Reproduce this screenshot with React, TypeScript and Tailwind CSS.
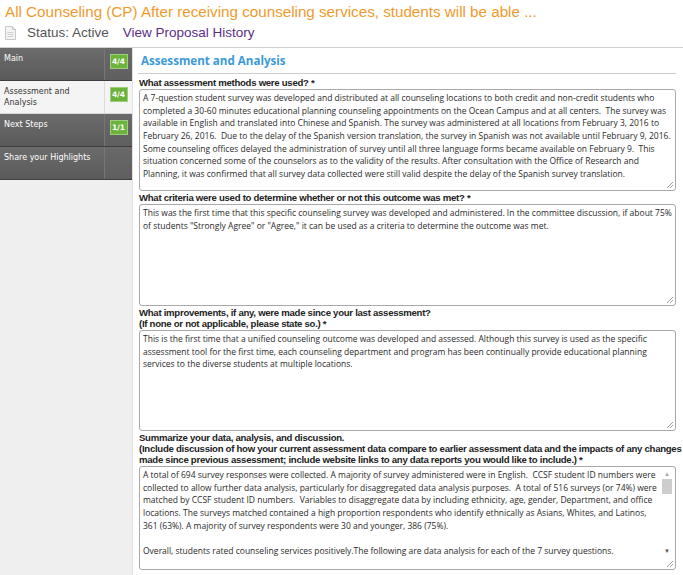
import React from 'react';

type NavItem = { label: string[]; badge?: string; active?: boolean };

const navItems: NavItem[] = [
  { label: ['Main'], badge: '4/4' },
  { label: ['Assessment and', 'Analysis'], badge: '4/4', active: true },
  { label: ['Next Steps'], badge: '1/1' },
  { label: ['Share your Highlights'] },
];

const answers = {
  methods: [
    'A 7-question student survey was developed and distributed at all counseling locations to both credit and non-credit students who',
    'completed a 30-60 minutes educational planning counseling appointments on the Ocean Campus and at all centers.  The survey was',
    'available in English and translated into Chinese and Spanish. The survey was administered at all locations from February 3, 2016 to',
    'February 26, 2016.  Due to the delay of the Spanish version translation, the survey in Spanish was not available until February 9, 2016.',
    'Some counseling offices delayed the administration of survey until all three language forms became available on February 9.  This',
    'situation concerned some of the counselors as to the validity of the results. After consultation with the Office of Research and',
    'Planning, it was confirmed that all survey data collected were still valid despite the delay of the Spanish survey translation.',
  ],
  criteria: [
    'This was the first time that this specific counseling survey was developed and administered. In the committee discussion, if about 75%',
    'of students "Strongly Agree" or "Agree," it can be used as a criteria to determine the outcome was met.',
  ],
  improvements: [
    'This is the first time that a unified counseling outcome was developed and assessed. Although this survey is used as the specific',
    'assessment tool for the first time, each counseling department and program has been continually provide educational planning',
    'services to the diverse students at multiple locations.',
  ],
  summary: [
    'A total of 694 survey responses were collected. A majority of survey administered were in English.  CCSF student ID numbers were',
    'collected to allow further data analysis, particularly for disaggregated data analysis purposes.  A total of 516 surveys (or 74%) were',
    'matched by CCSF student ID numbers.  Variables to disaggregate data by including ethnicity, age, gender, Department, and office',
    'locations. The surveys matched contained a high proportion respondents who identify ethnically as Asians, Whites, and Latinos,',
    '361 (63%). A majority of survey respondents were 30 and younger, 386 (75%).',
    '',
    'Overall, students rated counseling services positively.The following are data analysis for each of the 7 survey questions.',
  ],
};

function DocIcon() {
  return (
    <svg width="11" height="14" viewBox="0 0 11 14" className="shrink-0">
      <path d="M0.5 0.5h7l3 3v10h-10z" fill="#f4f4f4" stroke="#c8c8c8" />
      <path d="M7.5 0.5v3h3" fill="#e6e6e6" stroke="#c8c8c8" />
      <path d="M2.5 6.5h6M2.5 8.5h6M2.5 10.5h6" stroke="#d0d0d0" />
    </svg>
  );
}

function Grip() {
  return (
    <svg width="9" height="9" viewBox="0 0 9 9" className="absolute right-[1px] bottom-[1px]">
      <path d="M8 2L2 8M8 5L5 8" stroke="#a0a0a0" strokeWidth="1" />
    </svg>
  );
}

function Answer({ lines, height, scroll }: { lines: string[]; height: string; scroll?: boolean }) {
  return (
    <div className={`relative ${height} border border-[#a9a9a9] rounded-[3px] bg-white overflow-hidden`}>
      <div className="pl-[3px] pt-[2px] font-['Open_Sans',sans-serif] text-[8.5px] leading-[12.7px] text-[#2a2a2a]">
        {lines.map((l, i) => (
          <div key={i} className="whitespace-pre h-[12.7px]">{l}</div>
        ))}
      </div>
      {scroll && (
        <div className="absolute right-[2px] top-[2px] w-[12px] h-[87px] flex flex-col items-center bg-white">
          <span className="text-[6px] leading-[10px] text-[#a8a8a8]">▲</span>
          <div className="w-[10px] h-[15px] bg-[#cdcdcd]" />
          <div className="flex-1" />
          <span className="text-[6px] leading-[10px] text-[#505050]">▼</span>
        </div>
      )}
      <Grip />
    </div>
  );
}

function Label({ lines }: { lines: string[] }) {
  return (
    <div className="py-[1px] text-[9.6px] leading-[11px] font-bold text-[#222] tracking-[-0.28px]">
      {lines.map((l, i) => (
        <div key={i} className="whitespace-nowrap">{l}</div>
      ))}
    </div>
  );
}

export default function App() {
  return (
    <div className="w-[683px] h-[575px] overflow-hidden bg-white font-['Liberation_Sans',Arial,sans-serif]">
      <header className="h-[47px] px-[5px] pt-[2px]">
        <h1 className="text-[15.2px] leading-[19px] text-[#f09a2d] whitespace-nowrap">
          All Counseling (CP) After receiving counseling services, students will be able ...
        </h1>
        <div className="flex items-center mt-[3px] text-[13.5px] leading-[18px]">
          <DocIcon />
          <span className="ml-[11px] text-[#555]">Status: Active</span>
          <a className="ml-[14px] text-[#5b2d86]">View Proposal History</a>
        </div>
      </header>
      <div className="h-[1px] bg-[#cfcfcf]" />

      <div className="flex h-[527px]">
        <aside className="w-[133px] shrink-0 bg-[#efefef] border-r border-[#e2e2e2]">
          {navItems.map((item, i) => (
            <div
              key={i}
              className={`flex h-[33px] border-b ${
                item.active
                  ? 'bg-[#f4f4f4] text-[#333] border-[#d8d8d8]'
                  : 'bg-linear-to-b from-[#6c6c6c] to-[#5a5a5a] text-white border-[#3f3f3f]'
              }`}
            >
              <div className="flex-1 pl-[4px] pt-[5px] font-['DejaVu_Sans',sans-serif] text-[8px] leading-[11px]">
                {item.label.map((l, j) => (
                  <div key={j} className="whitespace-nowrap">{l}</div>
                ))}
              </div>
              <div
                className={`w-[28px] flex justify-center pt-[6px] border-l ${
                  item.active ? 'border-[#dcdcdc]' : 'border-[#777] bg-[#666]/40'
                }`}
              >
                {item.badge && (
                  <span className="h-[15px] w-[18px] flex items-center justify-center bg-[#6cb33c] border border-[#9ccf7c] text-white font-bold text-[7.5px] font-['DejaVu_Sans',sans-serif]">
                    {item.badge}
                  </span>
                )}
              </div>
            </div>
          ))}
        </aside>

        <main className="flex-1 min-w-0 pl-[5px] pr-[7px]">
          <h2 className="h-[26px] pt-[5px] pl-[3px] border-b border-[#cccccc] text-[11.6px] leading-[16px] font-bold text-[#3b9ad8] font-['Open_Sans',sans-serif]">
            Assessment and Analysis
          </h2>
          <div className="pl-[1px] pt-[2px]">
            <Label lines={['What assessment methods were used? *']} />
            <Answer lines={answers.methods} height="h-[102px]" />
            <Label lines={['What criteria were used to determine whether or not this outcome was met? *']} />
            <Answer lines={answers.criteria} height="h-[102px]" />
            <Label
              lines={[
                'What improvements, if any, were made since your last assessment?',
                '(If none or not applicable, please state so.) *',
              ]}
            />
            <Answer lines={answers.improvements} height="h-[101px]" />
            <Label
              lines={[
                'Summarize your data, analysis, and discussion.',
                '(Include discussion of how your current assessment data compare to earlier assessment data and the impacts of any changes',
                'made since previous assessment; include website links to any data reports you would like to include.) *',
              ]}
            />
            <Answer lines={answers.summary} height="h-[104px]" scroll />
          </div>
        </main>
      </div>
    </div>
  );
}
